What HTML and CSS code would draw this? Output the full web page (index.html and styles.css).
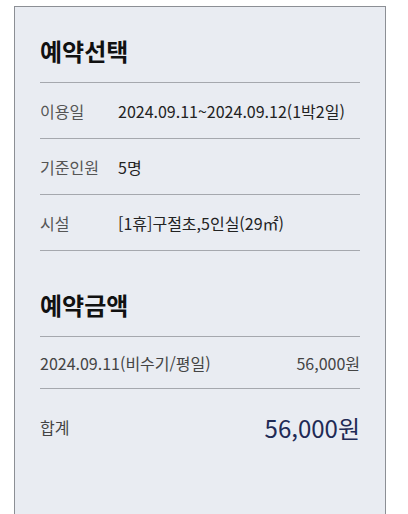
FILE: index.html
```html
<!DOCTYPE html>
<html lang="ko">
<head>
    <meta charset="UTF-8">
    <title>예약선택</title>
    <link rel="stylesheet" href="styles.css">
</head>
<body>

    <div class="panel">
        <h2 class="panel-title">예약선택</h2>
        <div class="info-row">
            <span class="info-label">이용일</span>
            <span class="info-value">2024.09.11~2024.09.12(1박2일)</span>
        </div>
        <div class="info-row">
            <span class="info-label">기준인원</span>
            <span class="info-value">5명</span>
        </div>
        <div class="info-row">
            <span class="info-label">시설</span>
            <span class="info-value">[1휴]구절초,5인실(29㎡)</span>
        </div>

        <h2 class="panel-title second">예약금액</h2>
        <div class="price-row">
            <span>2024.09.11(비수기/평일)</span>
            <span>56,000원</span>
        </div>
        <div class="total-row">
            <span class="total-label">합계</span>
            <span class="total-value">56,000원</span>
        </div>
    </div>

</body>
</html>
```

FILE: styles.css
```css
body {
    margin: 0;
    background: #fff;
    font-family: "Noto Sans CJK KR", "Noto Sans", sans-serif;
    color: #222;
}
.panel {
    margin: 6px 0 0 14px;
    width: 320px;
    min-height: 520px;
    padding: 29px 25px 0;
    background: #e9ecf2;
    border: 1px solid #8c8f95;
}
.panel-title {
    margin: 0;
    padding-bottom: 16px;
    font-size: 24px;
    line-height: 30px;
    font-weight: bold;
    color: #111;
    border-bottom: 1px solid #a5a8ae;
}
.panel-title.second {
    margin-top: 39px;
}
.info-row {
    display: flex;
    align-items: center;
    height: 55px;
    font-size: 16px;
    border-bottom: 1px solid #a5a8ae;
}
.info-label {
    width: 78px;
    color: #555;
}
.info-value {
    color: #222;
}
.price-row {
    display: flex;
    justify-content: space-between;
    align-items: center;
    height: 51px;
    font-size: 16px;
    color: #444;
    border-bottom: 1px solid #a5a8ae;
}
.total-row {
    display: flex;
    justify-content: space-between;
    align-items: center;
    height: 76px;
}
.total-label {
    font-size: 16px;
    color: #444;
}
.total-value {
    font-size: 24px;
    color: #1f2a55;
}
```
